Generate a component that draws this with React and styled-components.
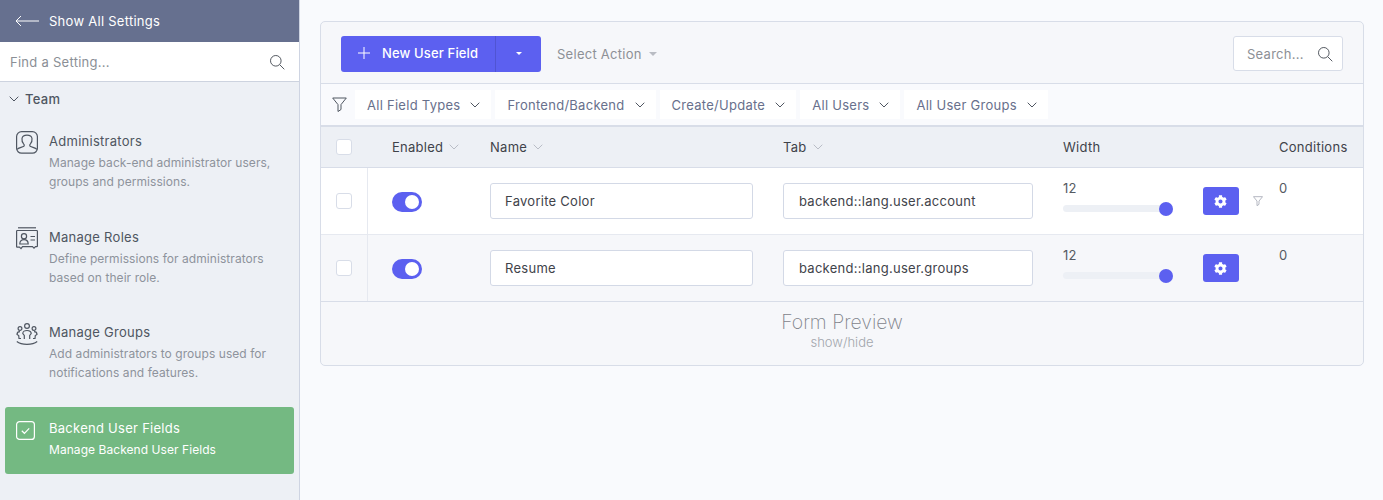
import React from 'react';
import styled, { createGlobalStyle } from 'styled-components';
import { FaCog } from 'react-icons/fa';

const GlobalStyle = createGlobalStyle`
    html, body {
        margin: 0;
        height: 100%;
        background: #f9fafd;
    }
    * {
        box-sizing: border-box;
    }
    body {
        font-family: Inter, "Liberation Sans", sans-serif;
        font-size: 13px;
        letter-spacing: 0.27px;
        color: #3f434a;
        overflow: hidden;
    }
`;

const Page = styled.div`
    display: flex;
    height: 500px;
`;

const Sidebar = styled.aside`
    width: 300px;
    flex: none;
    background: #edf0f5;
    border-right: 1px solid #ced4e2;
`;

const BackLink = styled.div`
    display: flex;
    align-items: center;
    gap: 10px;
    height: 42px;
    padding-left: 15px;
    background: #66708f;
    color: #fff;
`;

const SideSearch = styled.div`
    display: flex;
    align-items: center;
    justify-content: space-between;
    height: 40px;
    padding: 0 14px 0 10px;
    background: #fff;
    border-bottom: 1px solid #cdd3df;
    color: #8b8f96;
`;

const GroupTitle = styled.div`
    display: flex;
    align-items: center;
    gap: 6px;
    height: 35px;
    padding: 0 0 2px 9px;
    color: #4f5661;
    font-weight: 500;
`;

const MenuList = styled.div`
    display: flex;
    flex-direction: column;
`;

const MenuItem = styled.div`
    display: flex;
    gap: 11px;
    height: ${({ $h }) => $h}px;
    margin: 0 5px;
    padding: ${({ $top }) => $top}px 0 0 11px;
    border-radius: 3px;
    background: ${({ $active }) => ($active ? '#74b982' : 'transparent')};
    color: ${({ $active }) => ($active ? '#fff' : '#4f5661')};
`;

const MenuIcon = styled.div`
    width: 22px;
    height: 24px;
    flex: none;
    margin-top: ${({ $shift }) => $shift}px;
`;

const MenuTitle = styled.div`
    line-height: 18px;
`;

const MenuText = styled.div`
    margin-top: 4px;
    font-size: 12px;
    letter-spacing: 0.06px;
    line-height: 18.5px;
    color: ${({ $active }) => ($active ? '#fff' : '#8d939c')};
`;

const Main = styled.main`
    flex: 1;
    padding: 21px 19px 0 20px;
`;

const Panel = styled.section`
    height: 345px;
    background: #f6f7fa;
    border: 1px solid #d8dde8;
    border-radius: 5px;
    overflow: hidden;
`;

const Toolbar = styled.div`
    display: flex;
    align-items: center;
    height: 62px;
    padding: 2px 20px 0;
    border-bottom: 1px solid #d8dde8;
`;

const NewButton = styled.div`
    display: flex;
    align-items: center;
    width: 200px;
    height: 36px;
    border-radius: 3px;
    background: #5c60f0;
    color: #fff;
    font-weight: 450;
    letter-spacing: 0.15px;
`;

const NewLabel = styled.div`
    display: flex;
    align-items: center;
    gap: 12px;
    width: 155px;
    height: 100%;
    padding: 0 0 2px 17px;
    border-right: 1px solid #5054d2;
`;

const NewCaret = styled.div`
    display: flex;
    justify-content: center;
    flex: 1;
`;

const Caret = styled.span`
    width: 0;
    height: 0;
    border-left: ${({ $half }) => $half}px solid transparent;
    border-right: ${({ $half }) => $half}px solid transparent;
    border-top: ${({ $half }) => $half + 0.5}px solid ${({ $color }) => $color};
`;

const ActionSelect = styled.div`
    display: flex;
    align-items: center;
    gap: 7px;
    margin-left: 16px;
    color: #8d9096;
`;

const ListSearch = styled.div`
    display: flex;
    align-items: center;
    justify-content: space-between;
    width: 110px;
    height: 35px;
    margin-left: auto;
    padding: 0 9px 0 13px;
    background: #fff;
    border: 1px solid #d8dde8;
    border-radius: 3px;
    color: #8d9096;
`;

const FilterBar = styled.div`
    display: flex;
    align-items: center;
    gap: 4px;
    height: 41px;
    padding-left: 11px;
    background: #f9fafd;
`;

const FilterIcon = styled.div`
    display: flex;
    width: 19px;
`;

const FilterChip = styled.div`
    display: flex;
    align-items: center;
    gap: 10px;
    height: 29px;
    padding: 0 11px 0 12px;
    background: #fff;
    color: #68708c;
`;

const rowColumns = `
    display: grid;
    grid-template-columns: 47px 122px 293px 280px 216px 1fr;
`;

const HeadRow = styled.div`
    ${rowColumns}
    height: 43px;
    background: #edf0f5;
    border-top: 2px solid #d8dde8;
    border-bottom: 1px solid #d8dde8;
    color: #3f434a;
`;

const HeadCell = styled.div`
    display: flex;
    align-items: center;
    gap: 6px;
    padding-left: ${({ $pad }) => $pad || 0}px;
`;

const CheckCell = styled.div`
    display: flex;
    align-items: center;
    justify-content: center;
    padding-right: 1px;
    border-right: ${({ $line }) => ($line ? '1px solid #e6e9f0' : 'none')};
`;

const Checkbox = styled.span`
    width: 16px;
    height: 16px;
    background: #fff;
    border: 1px solid #d8dde8;
    border-radius: 3px;
`;

const Row = styled.div`
    ${rowColumns}
    height: 67px;
    background: ${({ $alt }) => ($alt ? '#f6f7fa' : '#fff')};
    border-bottom: 1px solid ${({ $last }) => ($last ? '#d8dde8' : '#e6e9f0')};
`;

const ToggleCell = styled.div`
    display: flex;
    align-items: center;
    padding: 2px 0 0 24px;
`;

const Toggle = styled.span`
    display: flex;
    align-items: center;
    justify-content: flex-end;
    width: 30px;
    height: 20px;
    padding-right: 3px;
    border-radius: 10px;
    background: #5c60f0;

    &::after {
        content: '';
        width: 14px;
        height: 14px;
        border-radius: 50%;
        background: #fff;
    }
`;

const InputCell = styled.div`
    display: flex;
    align-items: center;
`;

const TextBox = styled.div`
    display: flex;
    align-items: center;
    width: ${({ $w }) => $w}px;
    height: 36px;
    padding-left: ${({ $pad }) => $pad}px;
    background: #fff;
    border: 1px solid #d3d9e6;
    border-radius: 3px;
    color: #3f434a;
`;

const WidthCell = styled.div`
    display: flex;
    align-items: center;
`;

const SliderBox = styled.div`
    width: 110px;
    height: 100%;
    padding-top: 12px;
    color: #555a62;
`;

const SliderTrack = styled.div`
    position: relative;
    height: 7px;
    margin-top: 9px;
    border-radius: 4px;
    background: #edf0f5;

    &::after {
        content: '';
        position: absolute;
        top: -3.5px;
        right: 0;
        width: 14px;
        height: 14px;
        border-radius: 50%;
        background: #5c60f0;
    }
`;

const GearButton = styled.div`
    display: flex;
    align-items: center;
    justify-content: center;
    width: 36px;
    height: 28px;
    margin-left: 30px;
    padding-right: 2px;
    border-radius: 3px;
    background: #5c60f0;
    color: #fff;
`;

const RowFilter = styled.div`
    display: flex;
    margin-left: 14px;
`;

const CountCell = styled.div`
    padding-top: 11px;
    line-height: 18px;
    color: #555a62;
`;

const Preview = styled.div`
    display: flex;
    flex-direction: column;
    align-items: center;
    padding-top: 8px;
`;

const PreviewTitle = styled.div`
    font-size: 19.4px;
    font-weight: 200;
    letter-spacing: 0;
    line-height: 24px;
    color: #7f838b;
`;

const PreviewLink = styled.div`
    font-size: 13px;
    line-height: 16px;
    font-weight: 300;
    letter-spacing: 0;
    color: #a2a6ac;
`;

const Chevron = ({ size = 10, color = '#4f5661' }) => (
    <svg width={size} height={size * 0.6} viewBox="0 0 10 6" fill="none" stroke={color} strokeWidth="1">
        <path d="M.7.7 5 5l4.3-4.3" />
    </svg>
);

const SearchIcon = ({ color = '#555a62' }) => (
    <svg width="16" height="16" viewBox="0 0 16 16" fill="none" stroke={color} strokeWidth="1">
        <circle cx="6.8" cy="6.8" r="5.3" />
        <path d="m10.7 10.7 4.6 4.6" />
    </svg>
);

const FunnelIcon = ({ size = 15, color = '#4f5661' }) => (
    <svg width={size} height={size} viewBox="0 0 15 15" fill="none" stroke={color} strokeWidth={size < 15 ? 1.3 : 1}>
        <path d="M.7 1h13.6L9 7.6v4.9l-3 2V7.6z" strokeLinejoin="round" />
    </svg>
);

const AdminIcon = () => (
    <svg width="22" height="23" viewBox="0 0 22 23" fill="none" stroke="#4f5661" strokeWidth="1.2">
        <rect x=".6" y=".6" width="20.8" height="21.6" rx="5" />
        <path d="M1 18.5c1.5-2 5-2 6.8-3.3.7-.6.5-1.700-.2-2.400C6 11 5.800 9 6 7.500c.3-2 2.500-3.300 5-3.300s4.700 1.300 5 3.300c.2 1.500 0 3.500-1.600 5.300-.7.7-.9 1.800-.2 2.400C16 16.500 19.500 16.500 21 18.500" />
    </svg>
);

const RolesIcon = () => (
    <svg width="22" height="23" viewBox="0 0 22 23" fill="none" stroke="#4f5661" strokeWidth="1.2">
        <path d="M2 .8h18" />
        <path d="M1.300 3.500h19.400a.7.7 0 0 1 .7.700v14.800a.7.7 0 0 1-.7.700h-1.200l-1.500 1.500-1.500-1.500H6.500L5 21.700l-1.500-1.500H1.300a.7.7 0 0 1-.7-.700V4.200a.7.7 0 0 1 .7-.700z" />
        <circle cx="8" cy="9.300" r="2.600" />
        <path d="M3.800 17c0-3 1.800-4.300 4.200-4.300s4.200 1.300 4.200 4.300z" />
        <path d="M14.500 9.500h4.500M14.500 13h4.500" />
    </svg>
);

const GroupsIcon = () => (
    <svg width="22" height="23" viewBox="0 0 22 23" fill="none" stroke="#4f5661" strokeWidth="1.200">
        <circle cx="11" cy="3" r="2.400" />
        <circle cx="4" cy="5.500" r="1.900" />
        <circle cx="18" cy="5.500" r="1.900" />
        <path d="M8.300 16v-3.500L6.800 10.500c0-2 2-3 4.200-3s4.200 1 4.200 3l-1.500 2V16" />
        <path d="M5 15.500H3l-.3-3-1.700-1c0-1.800 1.300-2.800 3-2.800" />
        <path d="M17 15.500h2l.3-3 1.700-1c0-1.800-1.300-2.800-3-2.800" />
        <path d="M.8 18.500c2.500 2 6 2.800 10.200 2.800s7.700-.8 10.200-2.800" />
    </svg>
);

const CheckIcon = () => (
    <svg width="19" height="19" viewBox="0 0 19 19" fill="none" stroke="#fff" strokeWidth="1.200">
        <rect x=".6" y=".6" width="17.800" height="17.800" rx="3" />
        <path d="m5.800 9.800 2.600 2.500 4.800-5" />
    </svg>
);

const menu = [
    { title: 'Administrators', text: ['Manage back-end administrator users,', 'groups and permissions.'], icon: <AdminIcon />, h: 96, top: 15, shift: -1 },
    { title: 'Manage Roles', text: ['Define permissions for administrators', 'based on their role.'], icon: <RolesIcon />, h: 95, top: 15, shift: -1 },
    { title: 'Manage Groups', text: ['Add administrators to groups used for', 'notifications and features.'], icon: <GroupsIcon />, h: 99, top: 15, shift: 0 },
    { title: 'Backend User Fields', text: ['Manage Backend User Fields'], icon: <CheckIcon />, h: 67, top: 12, shift: 2, active: true },
];

const filters = ['All Field Types', 'Frontend/Backend', 'Create/Update', 'All Users', 'All User Groups'];

const fields = [
    { name: 'Favorite Color', tab: 'backend::lang.user.account', hasFilter: true },
    { name: 'Resume', tab: 'backend::lang.user.groups', alt: true, last: true },
];

export default function App() {
    return (
        <Page>
            <GlobalStyle />
            <Sidebar>
                <BackLink>
                    <svg width="24" height="12" viewBox="0 0 24 12" fill="none" stroke="#fff" strokeWidth="1">
                        <path d="M24 6H1M6 1 1 6l5 5" />
                    </svg>
                    Show All Settings
                </BackLink>
                <SideSearch>
                    Find a Setting...
                    <SearchIcon />
                </SideSearch>
                <GroupTitle>
                    <Chevron />
                    Team
                </GroupTitle>
                <MenuList>
                    {menu.map(item => (
                        <MenuItem key={item.title} $h={item.h} $top={item.top} $active={item.active}>
                            <MenuIcon $shift={item.shift}>{item.icon}</MenuIcon>
                            <div>
                                <MenuTitle>{item.title}</MenuTitle>
                                <MenuText $active={item.active}>
                                    {item.text.map(line => <div key={line}>{line}</div>)}
                                </MenuText>
                            </div>
                        </MenuItem>
                    ))}
                </MenuList>
            </Sidebar>
            <Main>
                <Panel>
                    <Toolbar>
                        <NewButton>
                            <NewLabel>
                                <svg width="12" height="12" viewBox="0 0 12 12" stroke="#fff" strokeWidth="1">
                                    <path d="M6 0v12M0 6h12" />
                                </svg>
                                New User Field
                            </NewLabel>
                            <NewCaret><Caret $half={3} $color="#fff" /></NewCaret>
                        </NewButton>
                        <ActionSelect>
                            Select Action
                            <Caret $half={4} $color="#b9bcc3" />
                        </ActionSelect>
                        <ListSearch>
                            Search...
                            <SearchIcon />
                        </ListSearch>
                    </Toolbar>
                    <FilterBar>
                        <FilterIcon><FunnelIcon /></FilterIcon>
                        {filters.map(label => (
                            <FilterChip key={label}>
                                {label}
                                <Chevron />
                            </FilterChip>
                        ))}
                    </FilterBar>
                    <HeadRow>
                        <CheckCell><Checkbox /></CheckCell>
                        <HeadCell $pad={24}>Enabled <Chevron color="#b9bdc6" /></HeadCell>
                        <HeadCell>Name <Chevron color="#b9bdc6" /></HeadCell>
                        <HeadCell>Tab <Chevron color="#b9bdc6" /></HeadCell>
                        <HeadCell>Width</HeadCell>
                        <HeadCell>Conditions</HeadCell>
                    </HeadRow>
                    {fields.map(field => (
                        <Row key={field.name} $alt={field.alt} $last={field.last}>
                            <CheckCell $line><Checkbox /></CheckCell>
                            <ToggleCell><Toggle /></ToggleCell>
                            <InputCell><TextBox $w={263} $pad={14}>{field.name}</TextBox></InputCell>
                            <InputCell><TextBox $w={250} $pad={15}>{field.tab}</TextBox></InputCell>
                            <WidthCell>
                                <SliderBox>
                                    12
                                    <SliderTrack />
                                </SliderBox>
                                <GearButton><FaCog size={13} /></GearButton>
                                {field.hasFilter && <RowFilter><FunnelIcon size={10} color="#a9adb8" /></RowFilter>}
                            </WidthCell>
                            <CountCell>0</CountCell>
                        </Row>
                    ))}
                    <Preview>
                        <PreviewTitle>Form Preview</PreviewTitle>
                        <PreviewLink>show/hide</PreviewLink>
                    </Preview>
                </Panel>
            </Main>
        </Page>
    );
}
